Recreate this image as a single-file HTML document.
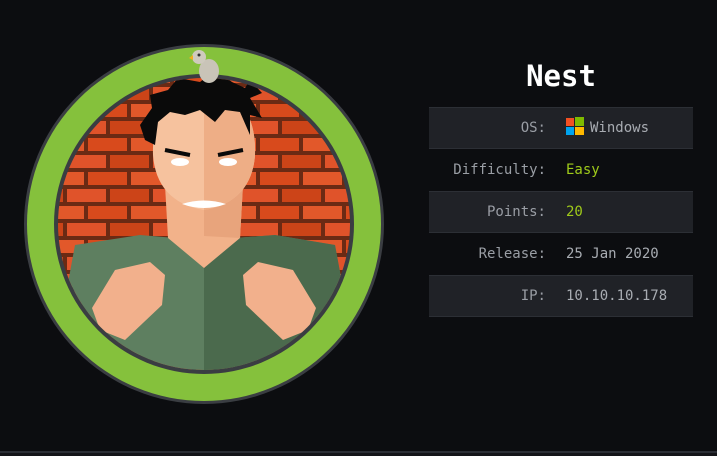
<!DOCTYPE html>
<html><head><meta charset="utf-8"><style>
html,body{margin:0;padding:0;}
body{width:717px;height:456px;background:#0c0d10;position:relative;overflow:hidden;font-family:"DejaVu Sans Mono","Liberation Mono",monospace;}
.title{position:absolute;left:429px;width:264px;top:58px;text-align:center;color:#fff;font-size:29px;font-weight:bold;line-height:36px;}
.tbl{position:absolute;left:429px;top:107px;width:264px;}
.row{height:42px;position:relative;font-size:14px;line-height:43px;}
.row.a{background:#202227;border-top:1px solid #2c2f35;border-bottom:1px solid #2c2f35;height:40px;line-height:41px;}
.lab{position:absolute;right:147px;color:#9a9ea5;}
.val{position:absolute;left:137px;color:#a8acb2;}
.g{color:#9fca1a;}
.line{position:absolute;left:0;top:451px;width:717px;height:2px;background:#2b2e35;}
.bot{position:absolute;left:0;top:453px;width:717px;height:3px;background:#141519;}
</style></head><body>
<svg width="420" height="456" style="position:absolute;left:0;top:0">
<defs><clipPath id="c"><circle cx="204" cy="224" r="146"/></clipPath>
<pattern id="br" x="0" y="0" width="86" height="34" patternUnits="userSpaceOnUse">
<rect width="86" height="34" fill="#6b2a14"/>
<rect x="2" y="2" width="39" height="13" fill="#d84a1c"/><rect x="45" y="2" width="39" height="13" fill="#e2582a"/>
<rect x="-19" y="19" width="39" height="13" fill="#e0532a"/><rect x="24" y="19" width="39" height="13" fill="#cc4418"/><rect x="67" y="19" width="39" height="13" fill="#e0532a"/>
</pattern></defs>
<circle cx="204" cy="224" r="180" fill="#3a3d42"/>
<circle cx="204" cy="224" r="177" fill="#85c13c"/>
<circle cx="204" cy="224" r="150" fill="#3a3d42"/>
<g clip-path="url(#c)">
<rect x="50" y="70" width="310" height="310" fill="url(#br)"/>
<path d="M75 245 L140 235 L175 238 L204 268 L235 238 L275 235 L335 245 L360 380 L50 380 Z" fill="#5e7f60"/>
<path d="M204 268 L235 238 L275 235 L335 245 L360 380 L204 380 Z" fill="#4b6a4d"/>
<path d="M165 185 L168 238 L204 268 L240 238 L243 185 Z" fill="#f2b28a"/>
<path d="M204 236 L240 238 L243 185 L204 200Z" fill="#e8a47c"/>
<path d="M204 92 C165 92 152 118 153 155 C155 185 172 205 204 210 C236 205 253 185 255 155 C256 118 243 92 204 92Z" fill="#f6c29e"/>
<path d="M204 92 C243 92 256 118 255 155 C253 185 236 205 204 210Z" fill="#eeae86"/>
<path d="M145 140 L140 125 L152 108 L150 95 L168 90 L178 78 L200 82 L215 70 L232 82 L245 88 L250 80 L262 93 L250 98 L262 118 L250 115 L250 135 L240 112 L225 110 L215 122 L200 110 L185 115 L170 112 L158 122 L155 145 Z" fill="#0a0a0a"/>
<path d="M165 150 L190 155 M218 155 L243 150" stroke="#0a0a0a" stroke-width="4"/>
<ellipse cx="180" cy="162" rx="9" ry="4" fill="#fff"/><ellipse cx="228" cy="162" rx="9" ry="4" fill="#fff"/>
<path d="M182 204 Q204 212 226 204 Q204 197 182 204Z" fill="#fff"/>
<path d="M92 308 L115 270 L150 262 L165 275 L162 305 L125 340 L100 330Z" fill="#f2b08c"/>
<path d="M316 308 L293 270 L258 262 L243 275 L246 305 L283 340 L308 330Z" fill="#f2b08c"/>
</g>
<ellipse cx="209" cy="71" rx="10" ry="12" fill="#c9c4b8"/>
<circle cx="199" cy="57" r="7" fill="#cfcabe"/>
<circle cx="199" cy="55" r="1.5" fill="#333"/>
<path d="M189 58 L193 55 L193 60Z" fill="#f0b020"/>
</svg>
<div class="title">Nest</div>
<div class="tbl">
<div class="row a"><span class="lab">OS:</span><span class="val"><svg width="18" height="18" style="vertical-align:-3px;margin-right:6px"><rect x="0" y="1" width="8" height="8" fill="#f25022"/><rect x="9" y="0" width="9" height="9" fill="#7fba00"/><rect x="0" y="10" width="8" height="8" fill="#00a4ef"/><rect x="9" y="10" width="9" height="8" fill="#ffb900"/></svg>Windows</span></div>
<div class="row"><span class="lab">Difficulty:</span><span class="val g">Easy</span></div>
<div class="row a"><span class="lab">Points:</span><span class="val g">20</span></div>
<div class="row"><span class="lab">Release:</span><span class="val">25 Jan 2020</span></div>
<div class="row a"><span class="lab">IP:</span><span class="val">10.10.10.178</span></div>
</div>
<div class="line"></div><div class="bot"></div>
</body></html>
